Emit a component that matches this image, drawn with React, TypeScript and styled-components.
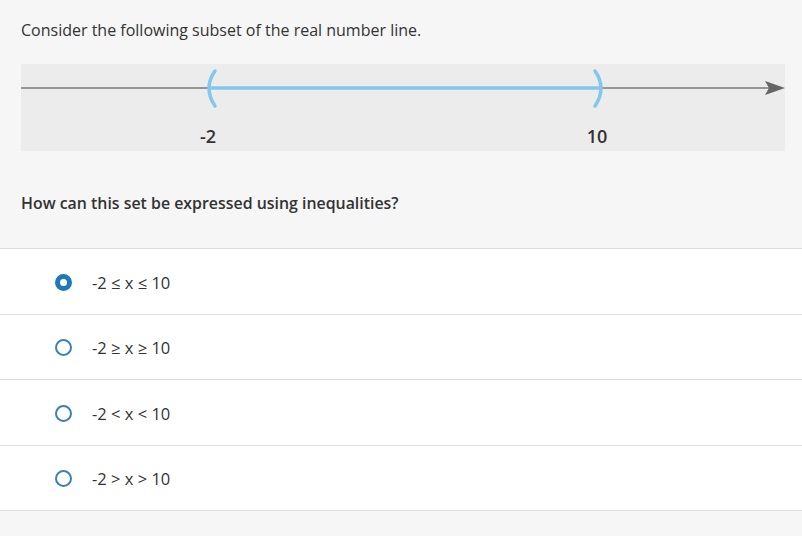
import styled, { createGlobalStyle } from 'styled-components';

const GlobalStyle = createGlobalStyle`
  html, body {
    margin: 0;
    padding: 0;
    background: #f6f6f6;
  }
  body {
    font-family: 'Open Sans', Lato, sans-serif;
    color: #333;
  }
`;

const options = ['-2 ≤ x ≤ 10', '-2 ≥ x ≥ 10', '-2 < x < 10', '-2 > x > 10'];

const NumberLine = () => (
  <LinePanel>
    <svg width='764' height='87' viewBox='0 0 764 87'>
      <line x1='0' y1='24' x2='752' y2='24' stroke='#7a7a7a' strokeWidth='1.5' />
      <path d='M764 24 L744 17 L748 24 L744 31 Z' fill='#666' />
      <line x1='189' y1='24' x2='578' y2='24' stroke='#82c8ee' strokeWidth='3.5' />
      <path d='M194 7 Q182 24 194 42' fill='none' stroke='#82c8ee' strokeWidth='3.5' strokeLinecap='round' />
      <path d='M574 7 Q586 24 574 42' fill='none' stroke='#82c8ee' strokeWidth='3.5' strokeLinecap='round' />
    </svg>
    <Tick $x={187}>-2</Tick>
    <Tick $x={576}>10</Tick>
  </LinePanel>
);

const App = () => (
  <>
    <GlobalStyle />
    <Header>
      <Prompt>Consider the following subset of the real number line.</Prompt>
      <NumberLine />
      <Question>How can this set be expressed using inequalities?</Question>
    </Header>
    <OptionList>
      {options.map((o, i) => (
        <Option key={o}>
          <Radio $checked={i === 0} />
          <span>{o}</span>
        </Option>
      ))}
    </OptionList>
  </>
);

const Header = styled.section`
  padding: 20px 17px 0 21px;
  border-bottom: 1px solid #dcdcdc;
`;

const Prompt = styled.p`
  margin: 0;
  font-size: 16px;
  line-height: 20px;
`;

const LinePanel = styled.div`
  position: relative;
  margin-top: 24px;
  height: 87px;
  background: #ececec;

  svg {
    display: block;
    position: absolute;
    left: 0;
    top: 0;
  }
`;

const Tick = styled.span<{ $x: number }>`
  position: absolute;
  top: 72px;
  left: ${(p) => p.$x}px;
  transform: translate(-50%, -50%);
  font-size: 18px;
  font-weight: 600;
  color: #333;
`;

const Question = styled.h2`
  margin: 42px 0 0;
  padding-bottom: 35px;
  font-size: 15.9px;
  line-height: 20px;
  font-weight: 600;
`;

const OptionList = styled.ul`
  list-style: none;
  margin: 0;
  padding: 0;
  background: #fff;
`;

const Option = styled.li`
  box-sizing: border-box;
  display: flex;
  align-items: center;
  gap: 20px;
  height: 65.5px;
  padding: 2px 0 0 55px;
  border-bottom: 1px solid #dedede;
  font-size: 16.5px;
  color: #333;
`;

const Radio = styled.span<{ $checked: boolean }>`
  box-sizing: border-box;
  width: 17px;
  height: 17px;
  border-radius: 50%;
  background: #fff;
  border: ${(p) => (p.$checked ? '5.5px solid #1f78b8' : '2px solid #3a80bd')};
`;

export default App;
